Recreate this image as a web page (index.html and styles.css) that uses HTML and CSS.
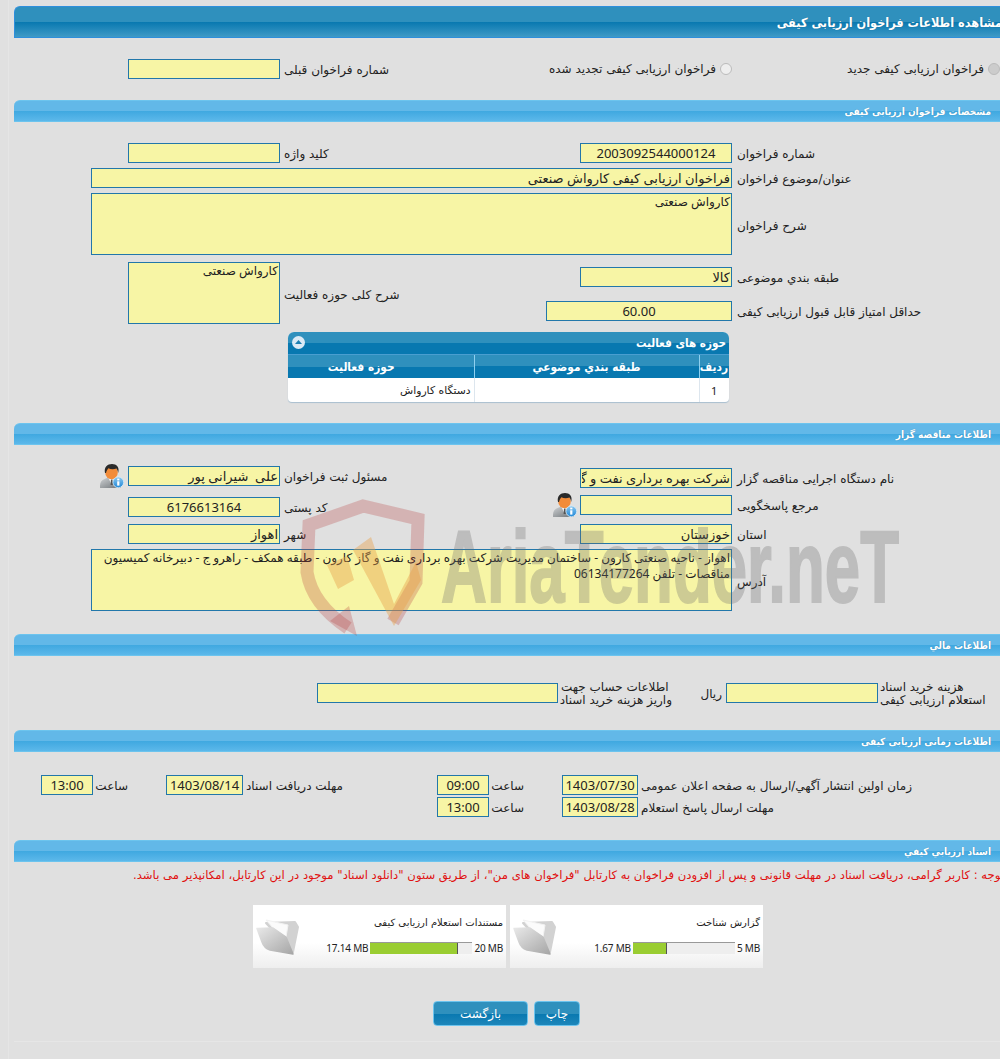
FILE: index.html
```html
<!DOCTYPE html>
<html lang="fa" dir="rtl">
<head>
<meta charset="utf-8">
<title>مشاهده اطلاعات فراخوان ارزیابی کیفی</title>
<link rel="stylesheet" href="styles.css">
</head>
<body>
<svg width="0" height="0" class="defs">
  <defs>
    <linearGradient id="suit" x1="0" y1="0" x2="1" y2="1">
      <stop offset="0" stop-color="#cfd2d4"/>
      <stop offset="1" stop-color="#6d7276"/>
    </linearGradient>
    <linearGradient id="info" x1="0" y1="0" x2="0" y2="1">
      <stop offset="0" stop-color="#8cc8f0"/>
      <stop offset="1" stop-color="#2088d8"/>
    </linearGradient>
    <symbol id="user" viewBox="0 0 24 24">
      <path d="M0 24c-.3-4.500 .8-7.500 4-8.800l4-1.700h6l3.500 1.500c2 1 3 3 3 5v4z" fill="url(#suit)"/>
      <path d="M8.500 14l3 6.500 3-6.500z" fill="#f6f6f6"/>
      <path d="M11 15.500h1.500l.6 5.500h-2.500z" fill="#555"/>
      <ellipse cx="11.500" cy="8.500" rx="6.300" ry="6.800" fill="#f28c3a"/>
      <path d="M5 9C3.800 3 7.500 0 12 0s7.800 2.800 6.200 9c-.3-2.200-1-3.700-1.800-4.500-2.800 1-5.900 .8-8-.3-1 1-1.900 2.700-2.400 4.800z" fill="#2a2a2a"/>
      <circle cx="18.300" cy="18.300" r="5.400" fill="url(#info)" stroke="#d8ecf9" stroke-width=".8"/>
      <rect x="17.200" y="17.300" width="2.200" height="4.300" fill="#fff"/>
      <rect x="17.200" y="14.600" width="2.200" height="1.800" fill="#fff"/>
    </symbol>
    <linearGradient id="fold" x1="0" y1="0" x2="1" y2="1">
      <stop offset="0" stop-color="#e8e8e8"/>
      <stop offset="1" stop-color="#a6a6a6"/>
    </linearGradient>
    <symbol id="folder" viewBox="0 0 44 38">
      <path d="M10 5L39 4 42 9 37 34z" fill="#d2d2d2" stroke="#d2d2d2" stroke-width="2" stroke-linejoin="round"/>
      <path d="M10 2L32 7 30 19 17 10z" fill="#fbfbfb" stroke="#f2f2f2" stroke-linejoin="round"/>
      <path d="M1 10.500L17 10 30 19 37 36 14 32Q8 30 6 24z" fill="url(#fold)" stroke="url(#fold)" stroke-width="1.500" stroke-linejoin="round"/>
    </symbol>
  </defs>
</svg>

<div class="page">
  <h1 class="bar bar-main">مشاهده اطلاعات فراخوان ارزیابی کیفی</h1>

  <div class="row radios">
    <label class="radio-item radio-new"><span class="radio on"></span>فراخوان ارزیابی کیفی جدید</label>
    <label class="radio-item radio-renew"><span class="radio"></span>فراخوان ارزیابی کیفی تجدید شده</label>
    <span class="lbl c3">شماره فراخوان قبلی</span>
    <input class="field col4" readonly>
  </div>

  <h2 class="bar bar-sec">مشخصات فراخوان ارزیابی کیفی</h2>
  <div class="row mt21">
    <span class="lbl c1">شماره فراخوان</span>
    <input class="field center" readonly value="2003092544000124">
    <span class="lbl c3">کلید واژه</span>
    <input class="field" readonly>
  </div>
  <div class="row mt5">
    <span class="lbl c1">عنوان/موضوع فراخوان</span>
    <input class="field span-wide" readonly value="فراخوان ارزیابی کیفی کارواش صنعتی">
  </div>
  <div class="row mt5">
    <span class="lbl c1 lbl-tall">شرح فراخوان</span>
    <textarea class="field area span-wide" readonly>کارواش صنعتی</textarea>
  </div>
  <div class="row row-pair mt7">
    <span class="lbl c1 r1">طبقه بندي موضوعی</span>
    <input class="field r1 r1-field" readonly value="کالا">
    <span class="lbl c1 r2">حداقل امتياز قابل قبول ارزيابی كيفی</span>
    <input class="field center w186 r2 r2-field" readonly value="60.00">
    <span class="lbl c3 rows lbl-tall">شرح کلی حوزه فعالیت</span>
    <textarea class="field area rows col4" readonly>کارواش صنعتی</textarea>
  </div>

  <div class="tbl-wrap">
    <div class="tbl-title">
      <span>حوزه های فعالیت</span>
      <svg class="collapse" width="13" height="13" viewBox="0 0 13 13"><circle cx="6.500" cy="6.500" r="6.500" fill="#dbeaf5"/><path d="M3 8l3.500-4L10 8z" fill="#1d7fb2"/></svg>
    </div>
    <table class="tbl">
      <thead>
        <tr><th class="t1">ردیف</th><th class="t2">طبقه بندي موضوعي</th><th class="t3">حوزه فعالیت</th></tr>
      </thead>
      <tbody>
        <tr><td class="num">1</td><td></td><td>دستگاه کارواش</td></tr>
      </tbody>
    </table>
  </div>

  <h2 class="bar bar-sec bar-3">اطلاعات مناقصه گزار</h2>
  <div class="row mt21">
    <span class="lbl c1 dn2">نام دستگاه اجرایی مناقصه گزار</span>
    <input class="field dn2" readonly value="شرکت بهره برداری نفت و گاز کارون">
    <span class="lbl c3">مسئول ثبت فراخوان</span>
    <input class="field" readonly value="علی  شیرانی پور">
    <svg class="user user-side" width="24" height="24"><use href="#user"/></svg>
  </div>
  <div class="row mt9">
    <span class="lbl c1">مرجع پاسخگویی</span>
    <input class="field" readonly>
    <div class="c3 split">
      <svg class="user" width="24" height="24"><use href="#user"/></svg>
      <span class="lbl dn2">کد پستی</span>
    </div>
    <input class="field center dn2" readonly value="6176613164">
  </div>
  <div class="row mt9">
    <span class="lbl c1">استان</span>
    <input class="field" readonly value="خوزستان">
    <span class="lbl c3">شهر</span>
    <input class="field" readonly value="اهواز">
  </div>
  <div class="row mt5">
    <span class="lbl c1 lbl-tall">آدرس</span>
    <textarea class="field area span-wide" readonly>اهواز - ناحیه صنعتی کارون - ساختمان مدیریت شرکت بهره برداری نفت و گاز کارون - طبقه همکف - راهرو ج - دبیرخانه کمیسیون
مناقصات - تلفن 06134177264</textarea>
  </div>

  <h2 class="bar bar-sec bar-4">اطلاعات مالي</h2>
  <div class="finance">
    <span class="lbl fin-l1">هزینه خرید اسناد<br>استعلام ارزیابی کیفی</span>
    <input class="field" readonly>
    <span class="lbl fin-unit">ریال</span>
    <span class="lbl fin-l2">اطلاعات حساب جهت<br>واریز هزینه خرید اسناد</span>
    <input class="field w241" readonly>
  </div>

  <h2 class="bar bar-sec bar-5">اطلاعات زمانی ارزیابی کیفی</h2>
  <div class="times">
    <span class="lbl">زمان اولین انتشار آگهي/ارسال به صفحه اعلان عمومی</span>
    <input class="field center" readonly value="1403/07/30">
    <span class="lbl t-hour">ساعت</span>
    <input class="field center" readonly value="09:00">
    <span class="lbl">مهلت دریافت اسناد</span>
    <input class="field center" readonly value="1403/08/14">
    <span class="lbl t-hour">ساعت</span>
    <input class="field center" readonly value="13:00">
    <span class="lbl">مهلت ارسال پاسخ استعلام</span>
    <input class="field center" readonly value="1403/08/28">
    <span class="lbl t-hour">ساعت</span>
    <input class="field center" readonly value="13:00">
  </div>

  <h2 class="bar bar-sec bar-6">اسناد ارزيابي كيفي</h2>
  <p class="note">توجه : کاربر گرامی، دریافت اسناد در مهلت قانونی و پس از افزودن فراخوان به کارتابل "فراخوان های من"، از طریق ستون "دانلود اسناد" موجود در این کارتابل، امکانپذیر می باشد.</p>

  <div class="cards">
    <div class="card">
      <div class="card-body">
        <div class="card-title">گزارش شناخت</div>
        <div class="meter">
          <span class="mb">5 MB</span>
          <span class="track"><span class="fill" style="width:33.400%"></span></span>
          <span class="mb">1.67 MB</span>
        </div>
      </div>
      <svg class="folder" width="44" height="38"><use href="#folder"/></svg>
    </div>
    <div class="card">
      <div class="card-body">
        <div class="card-title">مستندات استعلام ارزیابی کیفی</div>
        <div class="meter">
          <span class="mb">20 MB</span>
          <span class="track"><span class="fill" style="width:85.700%"></span></span>
          <span class="mb">17.14 MB</span>
        </div>
      </div>
      <svg class="folder" width="44" height="38"><use href="#folder"/></svg>
    </div>
  </div>

  <div class="buttons">
    <button class="btn btn-print" type="button">چاپ</button>
    <button class="btn btn-back" type="button">بازگشت</button>
  </div>
  <div class="foot"></div>
</div>

<svg class="watermark" width="1000" height="1059" viewBox="0 0 1000 1059">
  <path d="M393 622L416 582 418 519 363 506 309 525 307 572Q312 604 348 628" fill="none" stroke="#b43c3c" stroke-opacity=".27" stroke-width="13"/>
  <path d="M330 621L357 636 349 606z" fill="#b43c3c" fill-opacity=".27"/>
  <path d="M327 565L347 556 354 580 338 589zM353 550L371 537 394 604 416 562 421 580 394 626z" fill="#e8a04a" fill-opacity=".42"/>
  <text class="wm-text" x="441" y="602" textLength="458" lengthAdjust="spacingAndGlyphs">AriaTender.neT</text>
</svg>
</body>
</html>
```
FILE: styles.css
```css
* { box-sizing: border-box; }
html, body { margin: 0; height: 1059px; overflow: hidden; }
body {
  background: #e0e0e0;
  font-family: "DejaVu Sans", sans-serif;
  font-size: 12px;
  color: #222;
  position: relative;
}
.defs { position: absolute; }
.page {
  margin-left: 8px;
  padding: 6px 0 0 5px;
  border-left: 1px solid #e5e5e5;
  height: 1059px;
}
.bar {
  margin: 0;
  color: #fff;
  font-family: "DejaVu Sans Condensed", "DejaVu Sans", sans-serif;
  font-weight: bold;
  text-shadow: 0 0 1px rgba(0, 0, 0, .25);
  border-top-left-radius: 6px;
}
.bar-main {
  height: 32px;
  line-height: 31px;
  font-size: 12.600px;
  margin-right: -2px;
  background: linear-gradient(#2f90bd 0, #2f90bd 50%, #0878b0 50%, #3f9ac6 100%);
  border-top: 1px solid #2e8fdc;
  border-left: 1px solid #2e8fdc;
  border-bottom: 1px solid #2e8fdc;
}
.bar-sec {
  height: 22px;
  line-height: 21px;
  font-size: 10px;
  padding-right: 9px;
  background: linear-gradient(#62b8e8 0, #62b8e8 50%, #3fa8e0 50%, #5cb8ea 100%);
  border-top: 1px solid #6cc4ee;
  border-bottom: 1px solid #6cc4ee;
}
.bar-3 { margin-top: 21px; }
.bar-4 { margin-top: 23px; }
.bar-5 { margin-top: 27px; }
.bar-6 { margin-top: 23px; }

.field {
  display: block;
  width: 152px;
  height: 20px;
  margin: 0;
  padding: 0 1px;
  border: 1px solid #2277aa;
  border-radius: 0;
  background: #f7f5a5;
  font-family: "Noto Sans", "DejaVu Sans", sans-serif;
  font-size: 13px;
  color: #222;
  text-align: right;
  outline: 0;
}
.center { text-align: center; }
.area {
  height: 62px;
  resize: none;
  overflow: hidden;
  line-height: 16px;
  font-size: 12px;
  white-space: pre;
}
.w186 { width: 186px; }
.w241 { width: 241px; }

.lbl { text-align: left; white-space: nowrap; padding-top: 2px; }
.lbl-tall { padding-top: 4px; }

.row {
  display: grid;
  grid-template-columns: 268px 152px 300px 152px 37px 1fr;
  align-items: center;
}
.row > .lbl.c1 { padding-left: 5px; grid-column: 1; }
.row > .c3 { grid-column: 3; padding-left: 4px; }
.col4 { grid-column: 4; }
.span-wide { grid-column: 2 / span 4; width: 641px; }
.mt5 { margin-top: 5px; }
.mt7 { margin-top: 7px; }
.mt9 { margin-top: 9px; }
.mt21 { margin-top: 21px; }
.dn2 { position: relative; top: 2px; }

.radios { height: 62px; }
.radios > * { grid-row: 1; }
.radio-item { display: flex; align-items: center; white-space: nowrap; justify-self: start; }
.radio-new { grid-column: 1; }
.radio-renew { grid-column: 2 / span 2; }
.radio {
  width: 12px;
  height: 12px;
  margin-left: 4px;
  border: 1px solid #bbb;
  border-radius: 50%;
  background: #eee;
}
.radio.on { background: #ccc; }

.user { display: block; margin: -2px 0; }
.user-side { justify-self: start; margin-right: 4px; }
.split { display: flex; justify-content: space-between; align-items: center; height: 20px; }
.split .user { margin-right: 3px; }

.row-pair { grid-template-rows: 25px 37px; height: 62px; }
.r1 { grid-row: 1; }
.r2 { grid-row: 2; }
.r1-field { grid-column: 2; align-self: end; }
.r2-field { grid-column: 2 / span 2; align-self: end; margin-bottom: 3px; }
.r1.lbl { align-self: end; line-height: 18px; }
.r2.lbl { align-self: end; line-height: 18px; margin-bottom: 3px; }
.rows { grid-row: 1 / span 2; }

.tbl-wrap {
  width: 441px;
  height: 70px;
  margin: 8px 271px 0 0;
  border-radius: 6px 6px 4px 4px;
  background: #fff;
  box-shadow: 0 1px 1px #a9bfd0;
  overflow: hidden;
}
.tbl-title {
  display: flex;
  justify-content: space-between;
  align-items: center;
  height: 23px;
  padding: 0 3px 1px 4px;
  color: #fff;
  font-family: "DejaVu Sans Condensed", "DejaVu Sans", sans-serif;
  font-weight: bold;
  font-size: 11.600px;
  background: linear-gradient(#2f90bd 0, #2f90bd 50%, #0878b0 50%, #0878b0 100%);
  border-bottom: 1px solid #4a9ed0;
}
.tbl { width: 100%; border-collapse: collapse; table-layout: fixed; font-size: 10.800px; }
.tbl th {
  height: 23px;
  padding: 0 1px;
  color: #fff;
  font-family: "DejaVu Sans Condensed", "DejaVu Sans", sans-serif;
  font-size: 11.800px;
  font-weight: bold;
  background: linear-gradient(#2f90bd 0, #2f90bd 50%, #0878b0 50%, #0878b0 100%);
  border-left: 1px solid #8ed0f0;
  text-align: center;
}
.tbl th:last-child, .tbl td:last-child { border-left: 0; }
.tbl td {
  height: 24px;
  padding: 0 3px;
  border-left: 1px solid #dde6ee;
  text-align: right;
}
.tbl td.num { text-align: center; font-family: "Noto Sans", sans-serif; font-size: 11px; }
.t1 { width: 30px; }
.t2 { width: 225px; }
.tbl th.t3 { padding-right: 40px; }

.finance { display: flex; align-items: center; margin-top: 27px; height: 20px; }
.fin-l1 { width: 122px; padding-left: 2px; line-height: 13px; }
.fin-unit { width: 54px; padding-right: 4px; text-align: right; }
.fin-l2 { width: 114px; padding-left: 3px; line-height: 13px; }

.times {
  display: grid;
  grid-template-columns: 362px 76px 73px 52px 194px 77px 73px 52px;
  grid-auto-rows: 20px;
  row-gap: 2px;
  align-items: center;
  margin-top: 23px;
}
.times > .lbl { padding-left: 3px; }
.times > .field { width: 100%; }
.times > .t-hour { padding-right: 38px; text-align: right; }

.note {
  margin: 6px -4px 0 0;
  height: 14px;
  line-height: 14px;
  font-size: 11.650px;
  color: #e01010;
  white-space: nowrap;
}
.cards { display: flex; gap: 4px; margin: 23px 237px 0 0; }
.card {
  display: flex;
  width: 253px;
  height: 63px;
  background: linear-gradient(#fff 0, #fff 60%, #eee 100%);
}
.card-body { flex: 1; padding: 11px 3px 0 0; font-size: 10px; }
.card-title { height: 14px; line-height: 14px; }
.meter { display: flex; align-items: center; gap: 2px; margin-top: 12px; height: 11px; }
.mb { font-family: "Noto Sans", sans-serif; font-size: 10px; letter-spacing: -.2px; direction: ltr; unicode-bidi: isolate; }
.track {
  display: flex;
  justify-content: flex-end;
  width: 102px;
  height: 12px;
  background: #eee;
  border-top: 1px solid #999;
}
.fill {
  display: block;
  height: 100%;
  background: #9acd32;
  border-right: 1px solid #555;
}
.folder { display: block; margin: 13px 0 0 3px; flex: none; }

.buttons { display: flex; gap: 6px; margin: 33px 420px 0 0; }
.btn {
  height: 25px;
  padding: 0;
  color: #fff;
  font-family: "DejaVu Sans", sans-serif;
  font-size: 12px;
  border: 1px solid #6cc4ee;
  border-radius: 4px;
  background: linear-gradient(#2f90bd 0, #2f90bd 50%, #0878b0 50%, #1d86ba 100%);
}
.btn-print { width: 46px; }
.btn-back { width: 95px; }
.foot { margin-top: 15px; border-top: 1px solid #e6e6e6; }

.watermark { position: absolute; left: 0; top: 0; pointer-events: none; }
.wm-text {
  font-family: "Liberation Sans", sans-serif;
  font-weight: bold;
  font-size: 102px;
  fill: #6e6e6e;
  stroke: #6e6e6e;
  stroke-width: 2px;
  opacity: .3;
  direction: ltr;
}
```
